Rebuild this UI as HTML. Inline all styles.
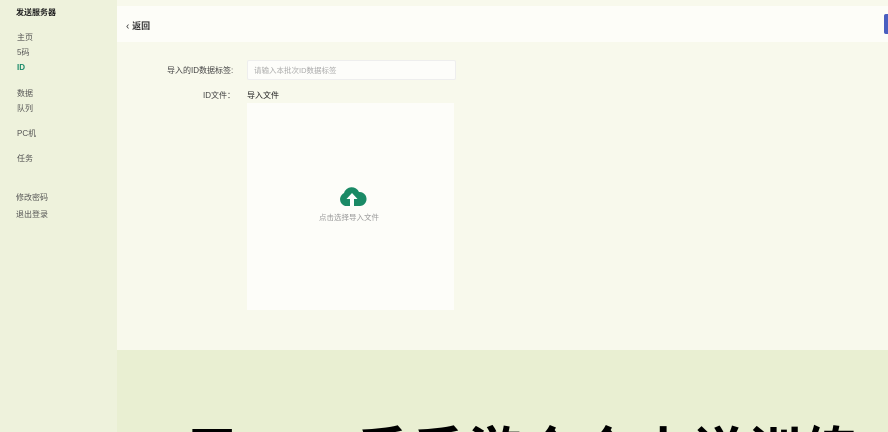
<!DOCTYPE html>
<html style="width:888px;height:432px;overflow:hidden"><head><meta charset="utf-8"><style>
body{margin:0;width:888px;height:432px;overflow:hidden;background:#e9efd2;font-family:"Liberation Sans","Noto Sans CJK SC",sans-serif;position:relative}
.side{position:absolute;left:0;top:0;width:117px;height:432px;background:#eef2dc}
.side div{position:absolute;left:17px;font-size:8px;color:#555}
.main{position:absolute;left:117px;top:0;width:771px;height:350px;background:#f8f9ec}
.hdr{position:absolute;left:117px;top:6px;width:771px;height:36px;background:#fdfdf8}
.t{position:absolute;font-size:8px;color:#444}
.inp{position:absolute;left:247px;top:60px;width:207px;height:18px;background:#fdfdfa;border:1px solid #eee;border-radius:2px}
.box{position:absolute;left:247px;top:103px;width:207px;height:207px;background:#fdfdf9}
.big{position:absolute;left:185px;top:406px;width:703px;height:26px;overflow:hidden;font-size:52px;font-weight:bold;color:#000;letter-spacing:4px;white-space:nowrap}
.big span{position:absolute;left:0;top:17px;line-height:60px}
</style></head><body>
<div class="side">
<div style="top:7px;color:#222;font-weight:bold;left:16px">发送服务器</div>
<div style="top:32px">主页</div>
<div style="top:47px">5码</div>
<div style="top:63px;color:#1a8a6a;font-weight:bold">ID</div>
<div style="top:88px">数据</div>
<div style="top:103px">队列</div>
<div style="top:128px">PC机</div>
<div style="top:153px">任务</div>
<div style="top:192px;left:16px">修改密码</div>
<div style="top:209px;left:16px">退出登录</div>
</div>
<div class="main"></div>
<div class="hdr"></div>
<div class="t" style="left:126px;top:19px;font-size:10px;color:#333">‹ <b style="font-size:9px">返回</b></div>
<div style="position:absolute;left:884px;top:14px;width:4px;height:20px;background:#4a5fc0;border-radius:2px 0 0 2px"></div>
<div class="t" style="left:167px;top:65px">导入的ID数据标签:</div>
<div class="inp"></div>
<div class="t" style="left:254px;top:65px;color:#aaa;font-size:7.5px">请输入本批次ID数据标签</div>
<div class="t" style="left:203px;top:90px">ID文件：</div>
<div class="t" style="left:247px;top:90px;color:#222">导入文件</div>
<div class="box"></div>
<svg style="position:absolute;left:337px;top:185px" width="30" height="24" viewBox="0 0 30 24">
<path d="M8 21 A7 7 0 0 1 7 8 A8 8 0 0 1 22 7 A6.5 6.5 0 0 1 23 21 Z" fill="#1a8a66"/>
<path d="M15 8 L9.5 14 H13 V21 H17 V14 H20.5 Z" fill="#fff"/>
</svg>
<div class="t" style="left:319px;top:212px;color:#999;font-size:7.5px">点击选择导入文件</div>
<div class="big"><span>用AI一手手游众众小说训练</span></div>
</body></html>
